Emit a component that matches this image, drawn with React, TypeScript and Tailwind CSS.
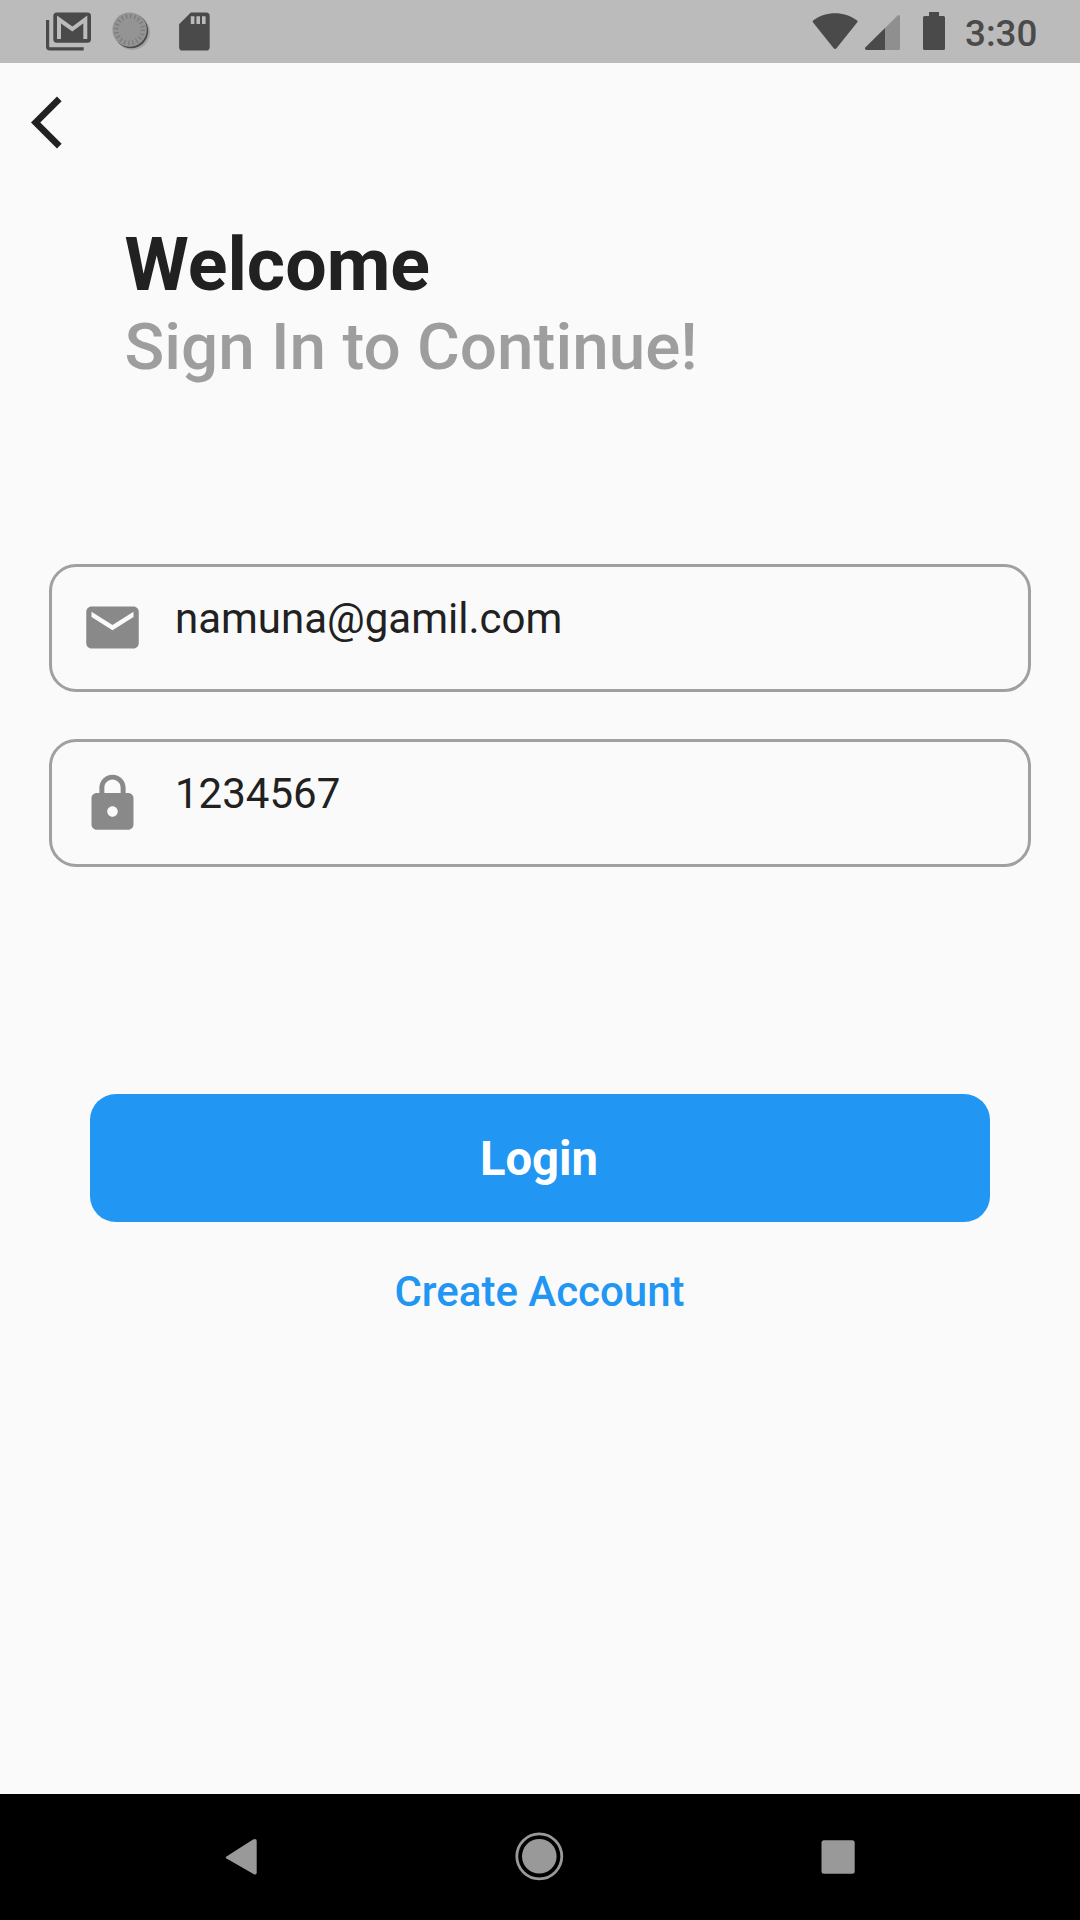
import type { ReactNode } from "react";

function PhotoMailIcon() {
  return (
    <svg className="h-[63px] w-[48px]" viewBox="45 0 48 63" fill="none">
      <path d="M47.6 20V46.5a2.3 2.3 0 0 0 2.3 2.3H83.7" stroke="#4a4a4a" strokeWidth="3.2" />
      <rect x="53.3" y="12.5" width="37.7" height="30.3" rx="3.6" fill="#4a4a4a" />
      <path d="M59 39V19.5L72.3 29L85.3 19.5V39" stroke="#bbbbbb" strokeWidth="4" />
    </svg>
  );
}

function SyncIcon() {
  return (
    <svg className="ml-[17px] h-[63px] w-[42px]" viewBox="110 0 42 63" fill="none">
      <circle cx="132.4" cy="32.3" r="17.6" fill="#a2a2a2" />
      <circle cx="131" cy="31" r="17.2" fill="#4a4a4a" />
      <circle cx="129.6" cy="29.6" r="17.2" fill="#949494" />
      <circle cx="129.6" cy="29.6" r="13.3" stroke="#7c7c7c" strokeWidth="4.6" strokeDasharray="1.3 2.878" />
    </svg>
  );
}

function SdCardIcon() {
  return (
    <svg className="ml-[27px] h-[63px] w-[31px]" viewBox="179 0 31 63">
      <path
        d="M190.8 12.5h15.3a3.6 3.6 0 0 1 3.6 3.6v30.8a3.6 3.6 0 0 1-3.6 3.6h-23.4a3.6 3.6 0 0 1-3.6-3.6V24.2z"
        fill="#4a4a4a"
      />
      <path d="M190.8 16.3h3.6V24h-3.6zM196.4 16.3h3.6V24h-3.6zM202 16.3h3.6V24H202z" fill="#bbbbbb" />
    </svg>
  );
}

function StatusBar() {
  return (
    <header className="flex h-[63px] items-center bg-[#bbbbbb] pl-[45px] pr-[42px]">
      <PhotoMailIcon />
      <SyncIcon />
      <SdCardIcon />
      <div className="flex-1" />
      <svg className="h-[63px] w-[46px]" viewBox="812 0 46 63" fill="#4a4a4a">
        <path d="M813.4 20.2C825.5 10.8 844.5 10.8 856.8 20.2q1.3 1 .3 2.3L836.5 48.3q-1.4 1.6-2.8 0L813.1 22.5q-1-1.3.3-2.3z" />
      </svg>
      <svg className="ml-[6px] h-[63px] w-[37px]" viewBox="864 0 37 63">
        <path d="M885 28L897.6 15.5Q900 14 900 16.5V48.5Q900 50 898.5 50H885z" fill="#8f8f8f" />
        <path d="M885 28V50H866.5Q864 49.5 865.5 47.3z" fill="#4a4a4a" />
      </svg>
      <svg className="ml-[22px] h-[63px] w-[22px]" viewBox="923 0 22 63" fill="#4a4a4a">
        <path d="M929 12h10v4h4.5q1.5 0 1.5 1.5v31q0 1.5-1.5 1.5h-19q-1.5 0-1.5-1.5v-31q0-1.5 1.5-1.5h4.500z" />
      </svg>
      <span className="ml-[20px] w-[73px] whitespace-nowrap pt-[4px] text-[36.75px] font-medium leading-[59px] text-[#4a4a4a]">
        3:30
      </span>
    </header>
  );
}

function Field({ icon, value }: { icon: ReactNode; value: string }) {
  return (
    <div className="flex h-[128px] items-center rounded-[27px] border-[3px] border-[#a0a0a0] pl-[28.5px]">
      {icon}
      <span className="ml-[31.5px] pb-[19px] text-[42px] leading-[49px] text-[#212121]">{value}</span>
    </div>
  );
}

function MailIcon() {
  return (
    <svg className="mb-[1.5px] size-[63px] shrink-0" viewBox="0 0 24 24" fill="#898989">
      <path d="M20 4H4c-1.1 0-1.99.9-1.99 2L2 18c0 1.1.9 2 2 2h16c1.1 0 2-.9 2-2V6c0-1.1-.9-2-2-2zm0 4l-8 5-8-5V6l8 5 8-5v2z" />
    </svg>
  );
}

function LockIcon() {
  return (
    <svg className="size-[63px] shrink-0" viewBox="0 0 24 24" fill="#898989">
      <path d="M18 8h-1V6c0-2.76-2.24-5-5-5S7 3.24 7 6v2H6c-1.1 0-2 .9-2 2v10c0 1.1.9 2 2 2h12c1.1 0 2-.9 2-2V10c0-1.1-.9-2-2-2zm-6 9c-1.1 0-2-.9-2-2s.9-2 2-2 2 .9 2 2-.9 2-2 2zm3.1-9H8.9V6c0-1.71 1.39-3.1 3.1-3.1s3.1 1.39 3.1 3.1v2z" />
    </svg>
  );
}

function NavButton({ label, children }: { label: string; children: ReactNode }) {
  return (
    <button aria-label={label} className="size-[60px]">
      <svg className="size-[60px]" viewBox="0 0 60 60" fill="#999999">
        {children}
      </svg>
    </button>
  );
}

export default function App() {
  return (
    <div className="flex h-[1920px] w-[1080px] flex-col bg-[#fafafa] font-[Roboto,sans-serif]">
      <StatusBar />
      <main className="flex flex-1 flex-col">
        <button aria-label="Back" className="ml-[31px] mt-[28px] size-[63px]">
          <svg className="size-[63px]" viewBox="0 0 24 24" fill="#212121">
            <path d="M11.67 3.87L9.9 2.1 0 12l9.9 9.9 1.77-1.77L3.54 12z" />
          </svg>
        </button>
        <div className="ml-[124.5px] mt-[68px]">
          <h1 className="text-[73.5px] font-bold leading-[86px] text-[#212121]">Welcome</h1>
          <p className="text-[65.625px] font-medium leading-[77px] text-[#9e9e9e]">Sign In to Continue!</p>
        </div>
        <div className="mx-[49px] mt-[179px] flex flex-col gap-[47px]">
          <Field icon={<MailIcon />} value="namuna@gamil.com" />
          <Field icon={<LockIcon />} value="1234567" />
        </div>
        <button className="mx-[90px] mt-[227px] h-[128px] rounded-[26px] bg-[#2196f3] pr-[2px] pt-[2px] text-[47.25px] font-bold text-white">
          Login
        </button>
        <a className="mt-[45px] pr-[1px] text-center text-[42px] font-medium leading-[49px] text-[#2196f3]">
          Create Account
        </a>
      </main>
      <nav className="flex h-[126px] items-center justify-between bg-black px-[211px]">
        <NavButton label="Back">
          <path d="M15.5 29.5L42 12.6Q45.7 11 45.7 14V45.5Q45.7 48.5 42.5 47L15.5 31.5Q14 30.5 15.5 29.5z" />
        </NavButton>
        <NavButton label="Home">
          <circle cx="29.3" cy="29.3" r="17.3" />
          <circle cx="29.3" cy="29.3" r="22.5" fill="none" stroke="#999999" strokeWidth="2.8" />
        </NavButton>
        <NavButton label="Recents">
          <rect x="12.5" y="13.3" width="33.2" height="33.4" rx="2.5" />
        </NavButton>
      </nav>
    </div>
  );
}
